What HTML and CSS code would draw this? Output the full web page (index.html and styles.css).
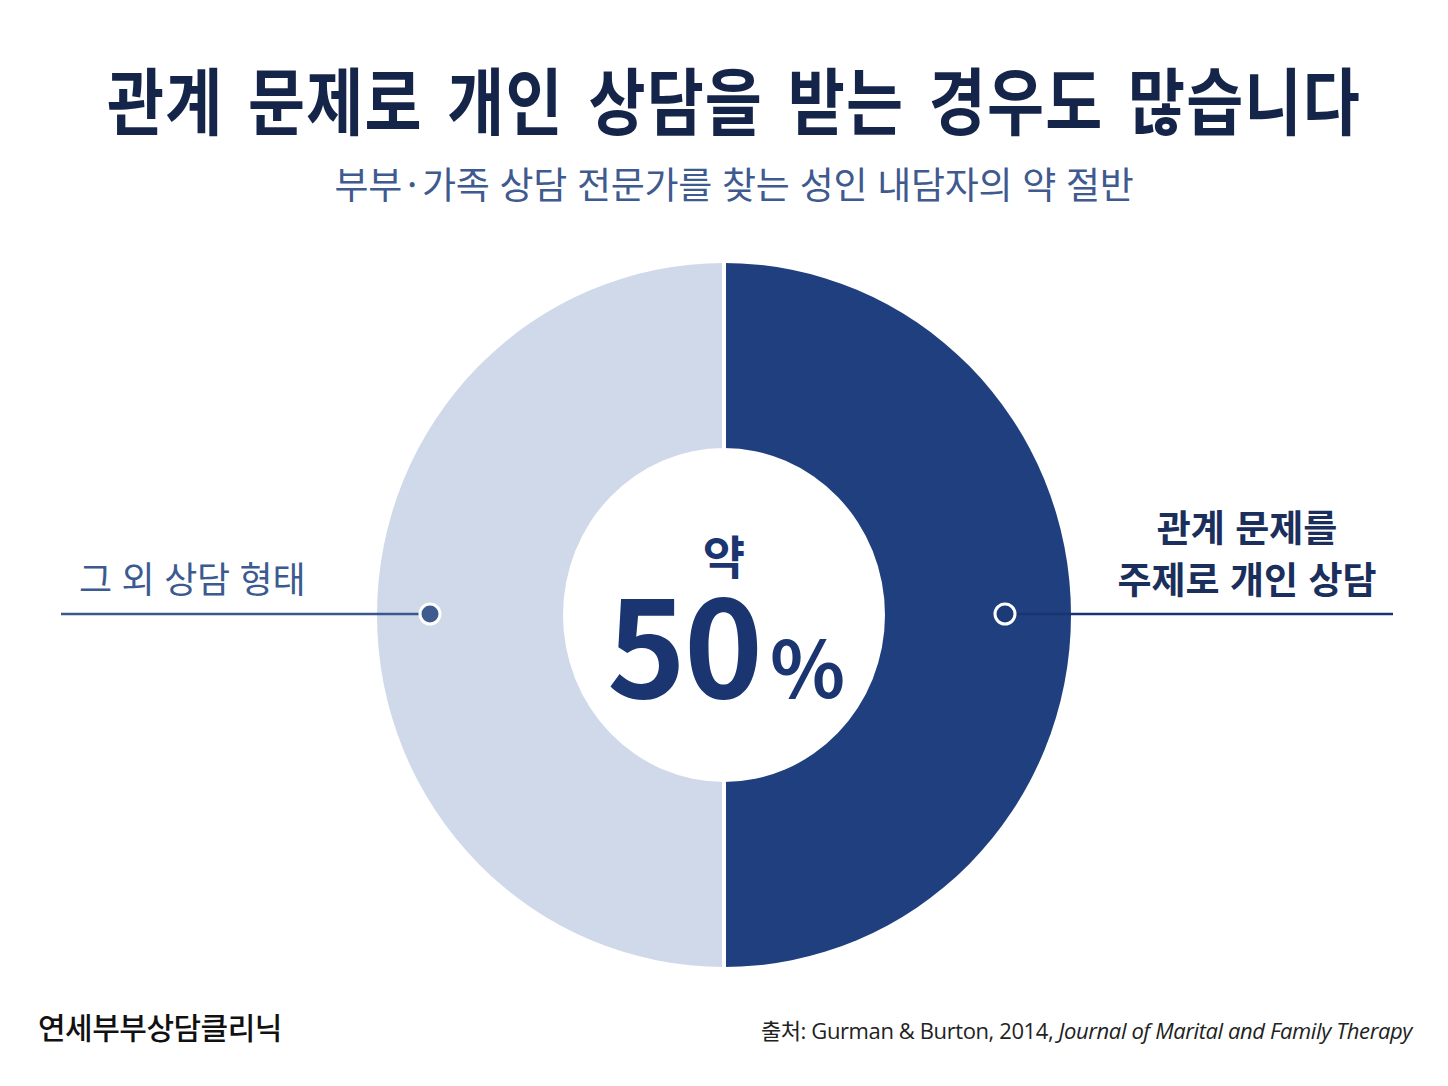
FILE: index.html
```html
<!DOCTYPE html>
<html lang="ko">
<head>
<meta charset="utf-8">
<title>관계 문제로 개인 상담을 받는 경우도 많습니다</title>
<link rel="stylesheet" href="styles.css">
</head>
<body>
<main class="page">
  <header class="head">
    <h1 class="title">관계 문제로 개인 상담을 받는 경우도 많습니다</h1>
    <p class="subtitle">부부<span class="mid">·</span>가족 상담 전문가를 찾는 성인 내담자의 약 절반</p>
  </header>

  <section class="chart">
    <svg class="donut" width="1448" height="750" viewBox="0 0 1448 750" xmlns="http://www.w3.org/2000/svg">
      <path class="seg-other" d="M724,24 A347,352 0 0 0 724,728 Z"/>
      <path class="seg-main" d="M724,24 A347,352 0 0 1 724,728 Z"/>
      <rect class="gap" x="722" y="16" width="4" height="720"/>
      <ellipse class="hole" cx="724" cy="376" rx="161" ry="167"/>

      <line class="lead-other" x1="61" y1="375" x2="430" y2="375"/>
      <circle class="dot-other" cx="430" cy="375" r="10"/>
      <line class="lead-main" x1="1005" y1="375" x2="1393" y2="375"/>
      <circle class="dot-main" cx="1005" cy="375" r="10"/>

      <text class="label-other" x="79" y="354">그 외 상담 형태</text>
      <text class="label-main" x="1247" y="303">관계 문제를</text>
      <text class="label-main" x="1247" y="355">주제로 개인 상담</text>

      <text class="center-small" x="724" y="335">약</text>
      <text class="center-big" x="726" y="459"><tspan class="num">50</tspan><tspan class="pct" dx="9">%</tspan></text>
    </svg>
  </section>

  <footer class="foot">
    <div class="brand">연세부부상담클리닉</div>
    <div class="source">출처: Gurman &amp; Burton, 2014, <em>Journal of Marital and Family Therapy</em></div>
  </footer>
</main>
</body>
</html>
```

FILE: styles.css
```css
html, body {
  margin: 0;
  padding: 0;
  background: #ffffff;
}

body {
  width: 1448px;
  height: 1086px;
  overflow: hidden;
  font-family: "Noto Sans CJK KR", "Noto Sans", sans-serif;
}

.page {
  display: flex;
  flex-direction: column;
  width: 1448px;
  height: 1086px;
}

.head {
  display: flex;
  flex-direction: column;
  align-items: center;
  padding-top: 57px;
  padding-left: 20px;
}

.title {
  margin: 0;
  font-size: 62px;
  line-height: 80px;
  font-weight: 700;
  letter-spacing: 1.2px;
  word-spacing: 6px;
  color: #15254a;
  transform: scaleY(1.18);
}

.subtitle {
  margin: 22px 0 0 0;
  font-size: 37px;
  line-height: 48px;
  font-weight: 400;
  letter-spacing: -0.3px;
  color: #3e5a8f;
}

.mid {
  margin: 0 5px;
}

.chart {
  display: flex;
  justify-content: center;
  margin-top: 32px;
  flex: 0 0 auto;
}

.donut {
  display: block;
}

.seg-other { fill: #cfd9ea; }
.seg-main { fill: #1f3f7e; }
.gap { fill: #ffffff; }
.hole { fill: #ffffff; }

.lead-other { stroke: #3a5890; stroke-width: 2.5; }
.lead-main { stroke: #1b3471; stroke-width: 2.5; }
.dot-other { fill: #3f5b8f; stroke: #ffffff; stroke-width: 3; }
.dot-main { fill: #1d3a78; stroke: #ffffff; stroke-width: 3; }

.label-other {
  font-size: 36px;
  font-weight: 400;
  fill: #3b5a90;
  letter-spacing: -0.3px;
}

.label-main {
  font-size: 37px;
  font-weight: 700;
  fill: #1b2f5c;
  text-anchor: middle;
  letter-spacing: 0;
}

.center-small {
  font-size: 46px;
  font-weight: 700;
  fill: #1a3570;
  text-anchor: middle;
}

.center-big {
  font-weight: 700;
  fill: #1a3570;
  text-anchor: middle;
}

.num { font-size: 134px; letter-spacing: -2px; }
.pct { font-size: 78px; }

.foot {
  display: flex;
  justify-content: space-between;
  align-items: flex-end;
  padding: 0 36px 0 38px;
  margin-top: 15px;
}

.brand {
  font-size: 30px;
  font-weight: 500;
  color: #111111;
  letter-spacing: -0.5px;
}

.source {
  font-family: "Open Sans", "Noto Sans CJK KR", sans-serif;
  font-size: 22px;
  color: #222222;
  letter-spacing: -0.4px;
  padding-bottom: 3px;
}

.source em {
  font-style: italic;
}
```
